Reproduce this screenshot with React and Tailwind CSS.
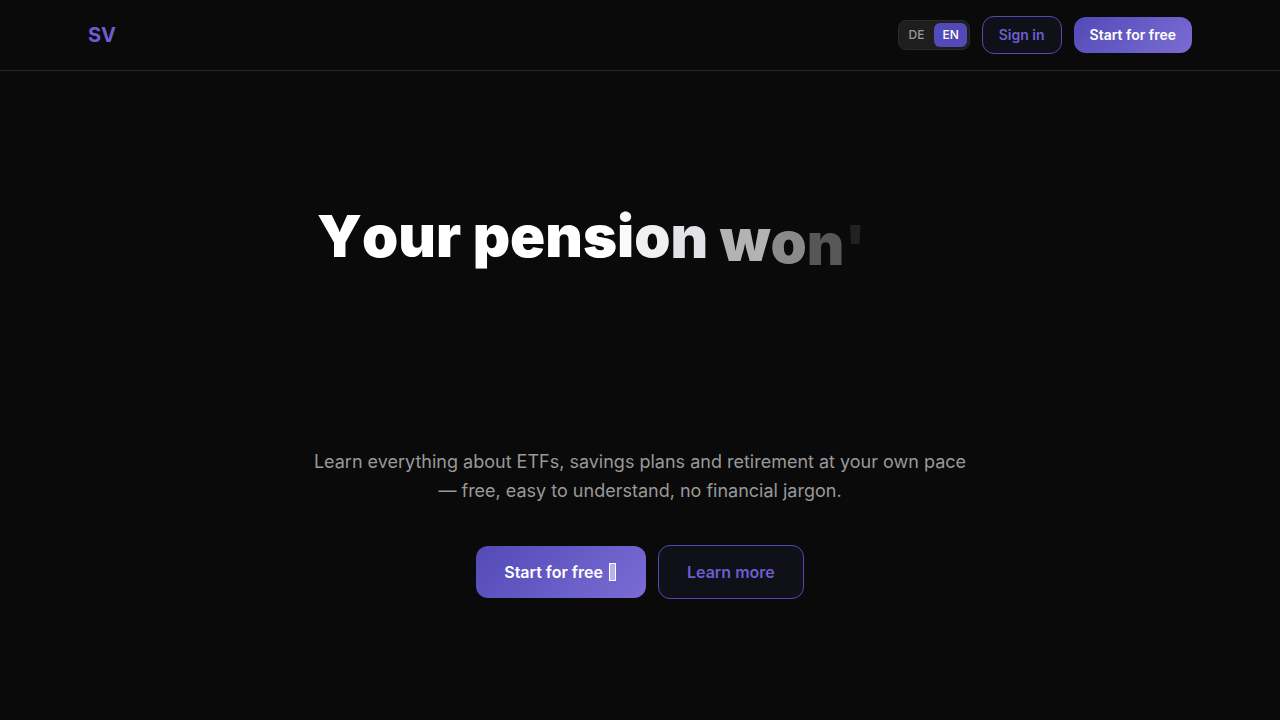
const headline = [
  [
    { char: 'Y', look: 'text-white' },
    { char: 'o', look: 'text-white' },
    { char: 'u', look: 'text-white' },
    { char: 'r', look: 'text-white' },
  ],
  [
    { char: 'p', look: 'text-white' },
    { char: 'e', look: 'text-white' },
    { char: 'n', look: 'text-white' },
    { char: 's', look: 'text-white' },
    { char: 'i', look: 'text-[#fafafa]' },
    { char: 'o', look: 'text-[#f0f0f2]' },
    { char: 'n', look: 'text-[#e3e2e7] translate-y-px' },
  ],
  [
    { char: 'w', look: 'text-[#b3b3b3] translate-y-1' },
    { char: 'o', look: 'text-[#8a8a8a] translate-y-1.5' },
    { char: 'n', look: 'text-[#575757] translate-y-2' },
    { char: "'", look: 'text-[#222222] translate-y-2.5' },
  ],
];

function Header() {
  return (
    <header className="border-b border-[#2a2a2a]">
      <div className="mx-auto flex max-w-[1200px] items-center justify-between px-12 py-4">
        <a href="#top" className="text-xl font-bold text-[#6c5ecf]">
          SV
        </a>
        <nav className="flex items-center gap-3">
          <div className="flex gap-0.5 rounded-lg border border-[#2a2a2a] bg-[#1e1e1e] p-0.5 text-xs font-medium">
            <button type="button" className="rounded-md px-2 py-1 text-[#999999]">
              DE
            </button>
            <button type="button" className="rounded-md bg-[#534ab7] px-2 py-1 text-white">
              EN
            </button>
          </div>
          <button
            type="button"
            className="rounded-xl border border-[#534ab7] bg-[#101018] px-4 py-2 text-sm font-semibold text-[#6c5ecf]"
          >
            Sign in
          </button>
          <button
            type="button"
            className="rounded-xl bg-linear-135 from-[#534ab7] to-[#7b6cd4] px-4 py-2 text-sm font-semibold text-white"
          >
            Start for free
          </button>
        </nav>
      </div>
    </header>
  );
}

function Headline() {
  return (
    <h1 className="mx-auto min-h-[200px] max-w-[646px] text-left text-[58px] leading-[66px] font-black">
      {headline.map((word, w) => (
        <span key={w}>
          <span className="inline-block whitespace-nowrap">
            {word.map(({ char, look }, i) => (
              <span key={i} className={`inline-block ${look}`}>
                {char}
              </span>
            ))}
          </span>{' '}
        </span>
      ))}
    </h1>
  );
}

export default function App() {
  return (
    <div id="top" className="min-h-screen bg-[#0a0a0a] font-['Inter',sans-serif] text-white">
      <Header />
      <main className="px-6 pt-[132px] pb-24 text-center">
        <Headline />
        <p className="mx-auto mt-11 max-w-[660px] text-lg leading-[29px] text-[#999999]">
          Learn everything about ETFs, savings plans and retirement at your own pace — free, easy to
          understand, no financial jargon.
        </p>
        <div className="mt-10 flex flex-wrap items-center justify-center gap-3">
          <button
            type="button"
            className="flex items-center gap-1.5 rounded-xl bg-linear-135 from-[#534ab7] to-[#7b6cd4] px-7 py-3.5 text-base font-semibold text-white"
          >
            Start for free
            <span
              aria-hidden="true"
              className="mr-0.5 h-[18px] w-[7px] border border-white bg-white/50"
            />
          </button>
          <button
            type="button"
            className="rounded-xl border border-[#534ab7] bg-[#101018] px-7 py-3.5 text-base font-semibold text-[#6c5ecf]"
          >
            Learn more
          </button>
        </div>
      </main>
    </div>
  );
}
